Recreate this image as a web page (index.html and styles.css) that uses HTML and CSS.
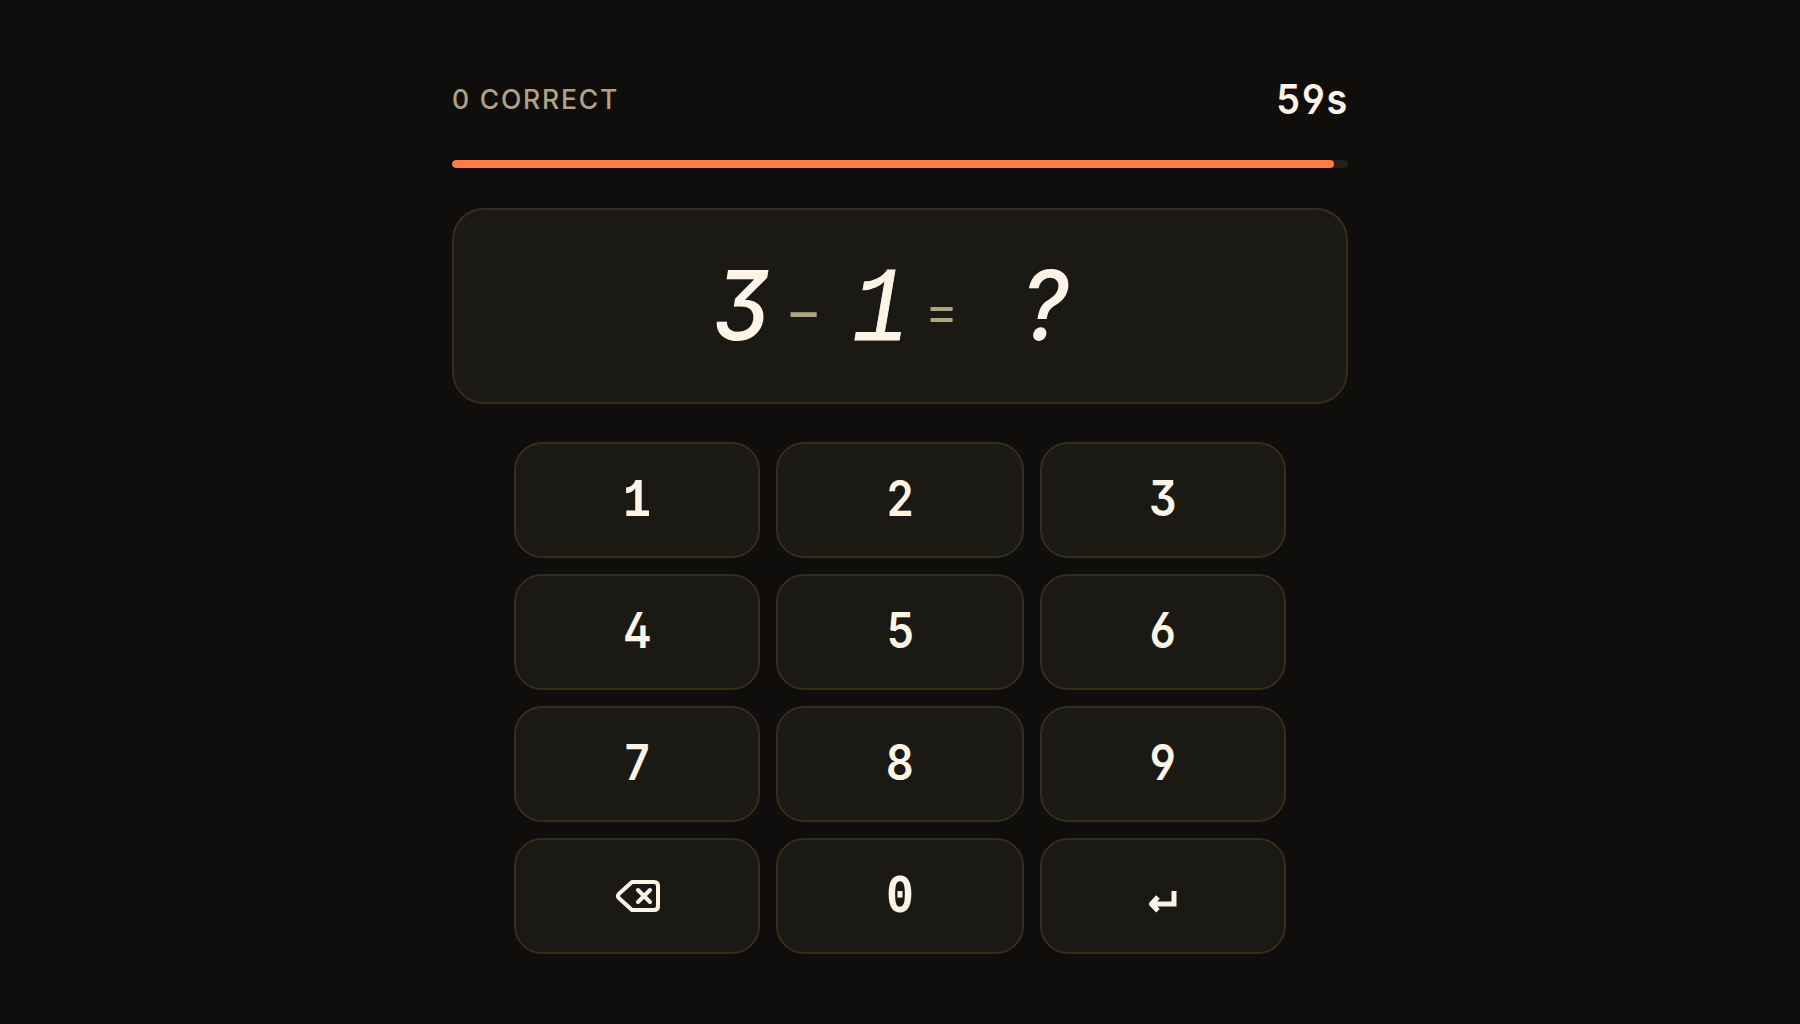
FILE: index.html
```
<!DOCTYPE html>
<html lang="en">
<head>
<meta charset="utf-8">
<title>Math sprint</title>
<link rel="stylesheet" href="styles.css">
</head>
<body>
<main class="game">
  <header class="status">
    <span class="score">0 CORRECT</span>
    <span class="timer">59s</span>
  </header>
  <div class="track"><div class="fill" style="width:98.4%"></div></div>
  <section class="problem">
    <span class="num">3</span><span class="op minus">−</span><span class="num one">1</span><span class="op equals">=</span><span class="answer">?</span>
  </section>
  <section class="keys">
    <button class="key"><span class="digit one">1</span></button>
    <button class="key"><span class="digit">2</span></button>
    <button class="key"><span class="digit">3</span></button>
    <button class="key"><span class="digit">4</span></button>
    <button class="key"><span class="digit">5</span></button>
    <button class="key"><span class="digit">6</span></button>
    <button class="key"><span class="digit">7</span></button>
    <button class="key"><span class="digit">8</span></button>
    <button class="key"><span class="digit">9</span></button>
    <button class="key" aria-label="Delete">
      <svg class="backspace" viewBox="0 0 48 48"><path d="M19 10H41Q45 10 45 14V34Q45 38 41 38H19L5.800 26Q4 24 5.800 22Z"/><path d="M25 18L37 30M37 18L25 30"/></svg>
    </button>
    <button class="key"><span class="digit zero">0</span></button>
    <button class="key" aria-label="Enter">
      <svg class="enter" viewBox="0 0 28 22"><path d="M25 0V13H2M9 6L2.500 13L9 19.800"/></svg>
    </button>
  </section>
</main>
</body>
</html>
```
FILE: styles.css
```
* { box-sizing: border-box; }
body {
  margin: 0;
  min-height: 1024px;
  background: #0f0e0c;
  color: #fdf4e6;
  font-family: Inter, sans-serif;
  overflow: hidden;
}
.game { width: 896px; margin: 0 auto; padding-top: 72px; }
.status { display: flex; justify-content: space-between; align-items: center; height: 56px; padding-bottom: 2px; }
.score { padding-bottom: 1px; font: 550 26.5px/36px Inter, sans-serif; letter-spacing: 1.8px; color: #b0a384; }
.timer {
  font-size: 41px;
  font-weight: 600;
  letter-spacing: 2px;
  margin-right: -1px;
  font-feature-settings: "cv03", "cv04";
  transform: scaleX(0.92);
  transform-origin: right center;
}
.track { height: 8px; margin-top: 32px; border-radius: 4px; background: #231f19; overflow: hidden; }
.fill { height: 100%; border-radius: 4px; background: #ff7c45; }
.problem {
  display: flex;
  align-items: center;
  justify-content: center;
  height: 196px;
  margin-top: 40px;
  padding-right: 16px;
  border: 2px solid #362e1d;
  border-radius: 32px;
  background: #1a1913;
}
.num, .answer { width: 58px; padding-bottom: 2px; font-size: 96px; font-style: italic; font-weight: 500; font-feature-settings: "cv09"; transform: scaleX(0.93); text-align: center; }
.num.one { margin-left: 10px; padding: 11px 0 0; font-family: "Liberation Mono", monospace; font-size: 106px; font-weight: 400; -webkit-text-stroke: 1px currentColor; transform: scaleX(0.88); }
.op { width: 70px; padding-top: 9px; text-align: center; color: #b0a384; }
.minus { font-size: 57px; }
.equals { font-size: 50px; }
.answer { margin-left: 39px; }
.keys {
  display: grid;
  grid-template-columns: 246px 248px 246px;
  grid-auto-rows: 116px;
  gap: 16px;
  width: 772px;
  margin: 38px auto 0;
}
.key {
  display: flex;
  align-items: center;
  justify-content: center;
  padding: 0;
  border: 2px solid #362e1d;
  border-radius: 28px;
  background: #1a1913;
  color: inherit;
  font-family: inherit;
}
.digit {
  padding-bottom: 3px;
  font-size: 49px;
  font-weight: 600;
  font-feature-settings: "cv02", "cv03", "cv04", "cv09";
  transform: scaleX(0.88);
}
.digit.one { padding: 4px 0 0; font-family: "Liberation Mono", monospace; font-size: 53px; font-weight: 700; }
.digit.zero { padding: 4px 0 0; font-family: "Liberation Mono", monospace; font-size: 53px; font-weight: 700; }
.backspace { width: 48px; height: 48px; fill: none; stroke: #fdf4e6; stroke-width: 4; stroke-linecap: round; stroke-linejoin: round; }
.enter { width: 28px; height: 22px; margin-top: 11px; fill: none; stroke: #fdf4e6; stroke-width: 5; }
```
